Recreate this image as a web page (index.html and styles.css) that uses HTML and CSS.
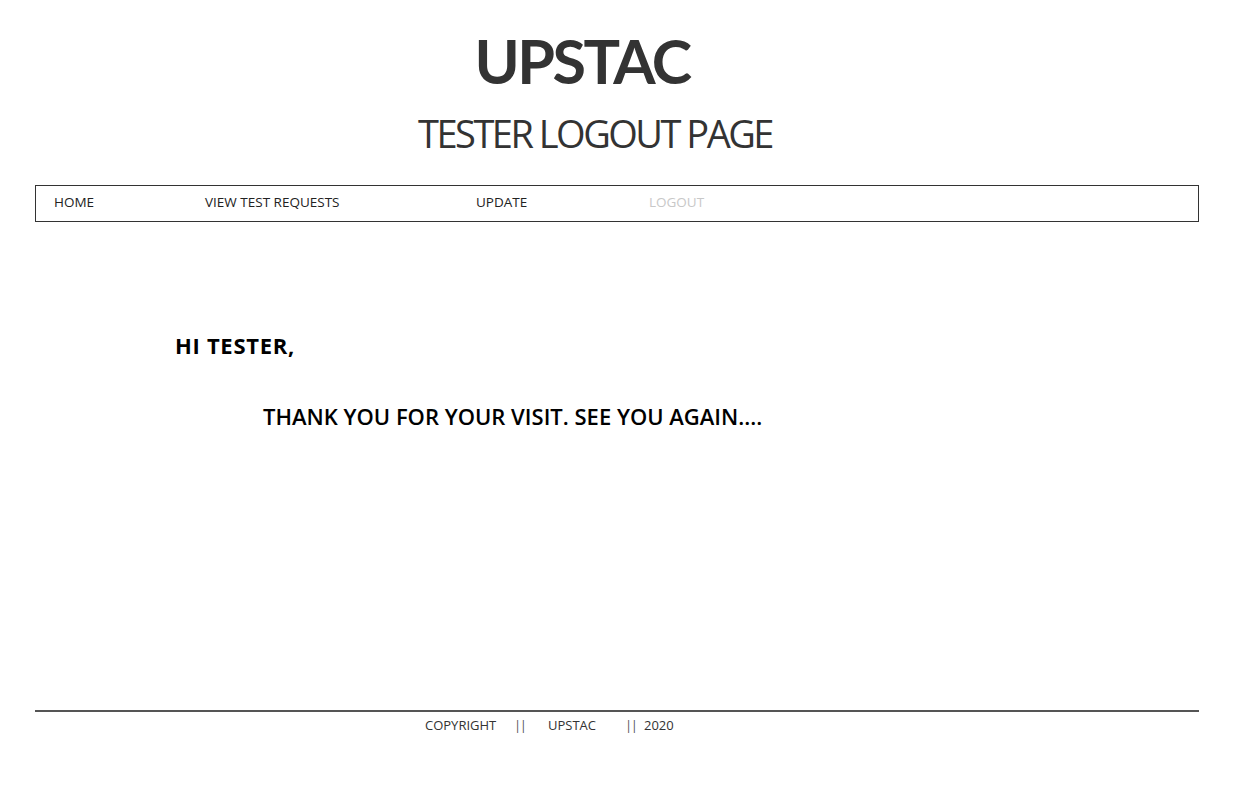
FILE: index.html
```html
<!DOCTYPE html>
<html>
<head>
<meta charset="utf-8">
<title>UPSTAC</title>
<link rel="stylesheet" href="styles.css">
</head>
<body>
<header class="masthead">
  <h1 class="brand">UPSTAC</h1>
  <h2 class="page-title">TESTER LOGOUT PAGE</h2>
</header>
<nav class="nav">
  <a class="nav-link nav-home" href="#">HOME</a>
  <a class="nav-link nav-view" href="#">VIEW TEST REQUESTS</a>
  <a class="nav-link nav-update" href="#">UPDATE</a>
  <a class="nav-link nav-active" href="#">LOGOUT</a>
</nav>
<main class="content">
  <p class="greet">HI TESTER,</p>
  <p class="thanks">THANK YOU FOR YOUR VISIT. SEE YOU AGAIN....</p>
</main>
<footer class="footer">
  <span class="f-item f-copy">COPYRIGHT</span>
  <span class="f-sep f-sep1">||</span>
  <span class="f-item f-brand">UPSTAC</span>
  <span class="f-sep f-sep2">||</span>
  <span class="f-item">2020</span>
</footer>
</body>
</html>
```
FILE: styles.css
```css
* { box-sizing: border-box; }
html, body { margin: 0; padding: 0; background: #fff; }
body {
  font-family: "Open Sans", "Liberation Sans", sans-serif;
  color: #333;
  width: 1242px;
  padding: 0 43px 0 35px;
}
.masthead {
  padding-top: 30px;
  text-align: center;
}
.brand {
  margin: 0;
  padding-right: 70px;
  font-family: "Lato", "Open Sans", sans-serif;
  font-size: 61px;
  line-height: 1;
  font-weight: 700;
  letter-spacing: -2.5px;
  color: #333;
}
.page-title {
  margin: 23px 0 0 0;
  padding-left: 32px;
  padding-right: 76px;
  font-size: 38px;
  line-height: 1;
  font-weight: 400;
  letter-spacing: -2.5px;
  color: #333;
}
.nav {
  margin-top: 33px;
  height: 37px;
  border: 1.5px solid #333;
  display: flex;
  align-items: center;
  padding-left: 18px;
  padding-bottom: 2px;
}
.nav-link {
  font-size: 13.5px;
  color: #222;
  text-decoration: none;
  line-height: 1;
  letter-spacing: 0;
}
.nav-home { width: 151px; }
.nav-view { width: 271px; }
.nav-update { width: 173px; }
.nav-active { color: #c8c8c8; }
.content {
  height: 488px;
  padding-top: 110px;
  padding-left: 140px;
}
.greet {
  margin: 0;
  font-size: 22px;
  line-height: 26px;
  font-weight: 700;
  letter-spacing: 0.7px;
  color: #000;
}
.thanks {
  margin: 45px 0 0 88px;
  font-size: 22px;
  line-height: 26px;
  font-weight: 600;
  color: #000;
}
.footer {
  border-top: 2px solid #555;
  display: flex;
  padding-left: 390px;
  padding-top: 5px;
  font-size: 13px;
  color: #333;
  line-height: 16px;
}
.f-copy { width: 89px; }
.f-sep { color: #555; letter-spacing: -1.5px; }
.f-sep1 { width: 34px; }
.f-sep2 { width: 19px; }
.f-brand { width: 77px; }
```
